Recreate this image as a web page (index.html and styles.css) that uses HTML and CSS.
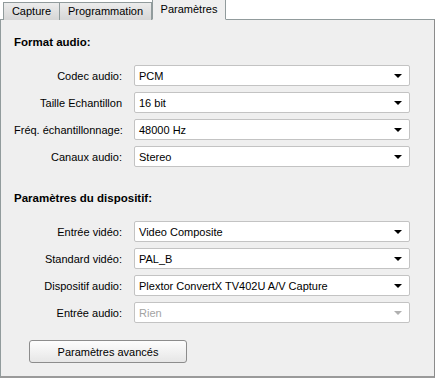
FILE: index.html
```html
<!DOCTYPE html>
<html>
<head>
<meta charset="utf-8">
<link rel="stylesheet" href="styles.css">
</head>
<body>
<div class="window">
  <div class="tabs">
    <div class="tab first">Capture</div>
    <div class="tab second">Programmation</div>
    <div class="tab active">Paramètres</div>
  </div>
  <div class="panel">
    <div class="heading">Format audio:</div>
    <div class="form">
      <label>Codec audio:</label>
      <div class="select"><span>PCM</span><i class="arrow"></i></div>
      <label>Taille Echantillon</label>
      <div class="select"><span>16 bit</span><i class="arrow"></i></div>
      <label>Fréq. échantillonnage:</label>
      <div class="select"><span>48000 Hz</span><i class="arrow"></i></div>
      <label>Canaux audio:</label>
      <div class="select"><span>Stereo</span><i class="arrow"></i></div>
    </div>
    <div class="heading second">Paramètres du dispositif:</div>
    <div class="form">
      <label>Entrée vidéo:</label>
      <div class="select"><span>Video Composite</span><i class="arrow"></i></div>
      <label>Standard vidéo:</label>
      <div class="select"><span>PAL_B</span><i class="arrow"></i></div>
      <label>Dispositif audio:</label>
      <div class="select"><span>Plextor ConvertX TV402U A/V Capture</span><i class="arrow"></i></div>
      <label>Entrée audio:</label>
      <div class="select disabled"><span>Rien</span><i class="arrow"></i></div>
    </div>
    <div class="actions">
      <button class="btn">Paramètres avancés</button>
    </div>
  </div>
</div>
</body>
</html>
```

FILE: styles.css
```css
* { box-sizing: border-box; }
html, body { margin: 0; padding: 0; background: #ffffff; }
body {
  font-family: Tahoma, "Liberation Sans", Arial, sans-serif;
  font-size: 11px;
  color: #000;
}
.window {
  width: 435px;
  height: 378px;
  display: flex;
  flex-direction: column;
}
.tabs {
  display: flex;
  align-items: flex-end;
  height: 20px;
  padding-left: 3px;
  position: relative;
  z-index: 1;
  margin-bottom: -1px;
}
.tab {
  height: 18px;
  line-height: 17px;
  text-align: center;
  border: 1px solid #919b9c;
  border-bottom: none;
  border-left: none;
  background: linear-gradient(#ececec, #d6d6d6);
  white-space: nowrap;
}
.tab.first { border-left: 1px solid #919b9c; width: 57px; }
.tab.second { width: 92px; }
.tab.active {
  width: 74px;
  height: 21px;
  line-height: 19px;
  background: #efefef;
  border: 1px solid #919b9c;
  border-bottom: 1px solid #efefef;
  margin-left: 0;
  border-top: 1px solid #ffffff;
}
.panel {
  flex: 1;
  background: #efefef;
  border: 1px solid #919b9c;
  border-right: 1px solid #8b8b8b;
  border-bottom: 2px solid #9a9a9a;
  padding: 15px 0 0 13px;
}
.heading {
  font-weight: bold;
  font-size: 11.5px;
  height: 14px;
  line-height: 14px;
}
.heading.second { margin-top: 24px; }
.form {
  display: grid;
  grid-template-columns: 108px 276px;
  column-gap: 12px;
  row-gap: 6px;
  margin-top: 16px;
  align-items: center;
}
label {
  text-align: right;
  white-space: nowrap;
}
.select {
  height: 21px;
  background: #fff;
  border: 1px solid #c3c3c3;
  border-radius: 2px;
  display: flex;
  align-items: center;
  justify-content: space-between;
  padding: 0 7px 0 4px;
}
.select span { white-space: nowrap; }
.arrow {
  width: 0; height: 0;
  border-left: 4px solid transparent;
  border-right: 4px solid transparent;
  border-top: 4px solid #000;
}
.select.disabled span { color: #a3a3a3; }
.select.disabled .arrow { border-top-color: #b0b0b0; }
.actions {
  margin-top: 17px;
  padding-left: 15px;
}
.btn {
  width: 158px;
  height: 23px;
  font: inherit;
  color: #000;
  background: linear-gradient(#fdfdfd, #e6e6e6);
  border: 1px solid #8c8c8c;
  border-radius: 3px;
  padding: 0;
}
```
